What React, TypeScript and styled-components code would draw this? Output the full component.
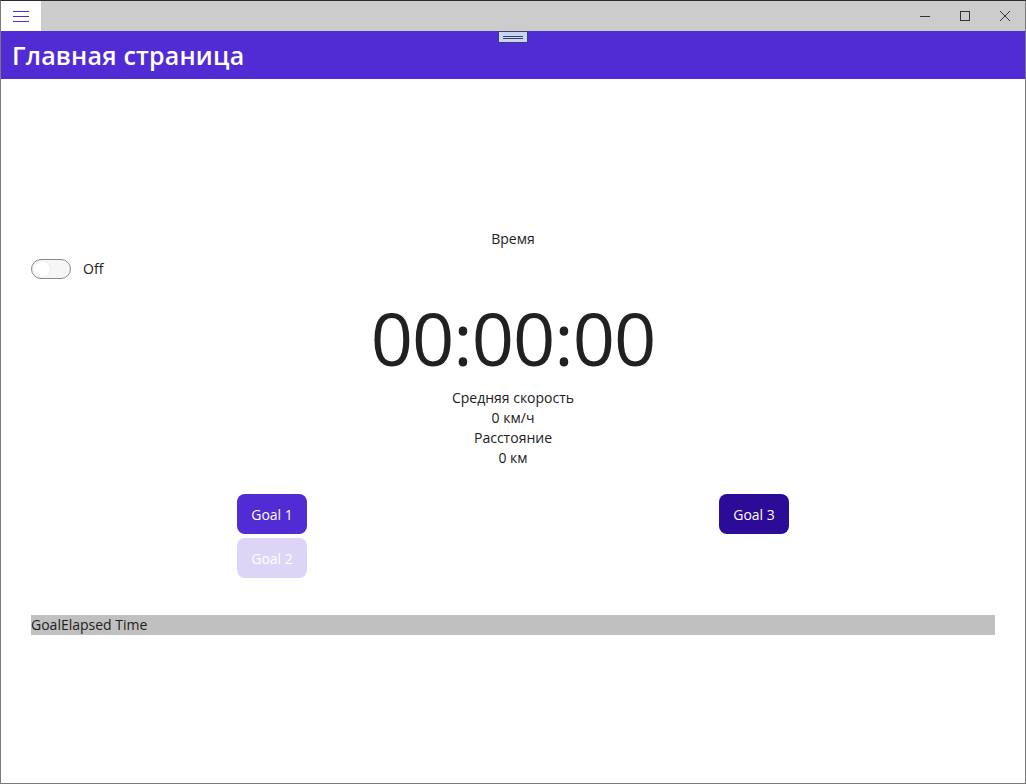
import styled, { createGlobalStyle } from "styled-components"

const Global = createGlobalStyle`
  html, body { margin: 0; padding: 0; background: #ffffff; }
  body { font-family: "Open Sans", "Liberation Sans", sans-serif; color: #212121; }
`

const Frame = styled.div`
  width: 1026px;
  height: 784px;
  box-sizing: border-box;
  border: 1px solid #7a7a7a;
  border-top-color: #2b2b2b;
  display: flex;
  flex-direction: column;
  position: relative;
  overflow: hidden;
`

const TitleBar = styled.div`
  height: 30px;
  background: #cccccc;
  display: flex;
  align-items: stretch;
`

const MenuButton = styled.div`
  width: 40px;
  background: #ffffff;
  display: flex;
  flex-direction: column;
  justify-content: center;
  align-items: center;
  gap: 4px;
`

const MenuLine = styled.span`
  width: 16px;
  height: 1px;
  background: #512bd4;
`

const Spacer = styled.div`
  flex: 1;
`

const WinButton = styled.div`
  width: 40px;
  display: flex;
  align-items: center;
  justify-content: center;
  color: #333;
`

const Header = styled.div`
  height: 48px;
  background: #512bd4;
  display: flex;
  align-items: center;
  padding-left: 11px;
  position: relative;
`

const HeaderTitle = styled.h1`
  margin: 0;
  color: #ffffff;
  font-size: 25px;
  font-weight: 600;
  letter-spacing: 0.2px;
`

const DragHandle = styled.div`
  position: absolute;
  left: 497px;
  top: 0;
  width: 30px;
  height: 12px;
  box-sizing: border-box;
  background: #c9d3f2;
  border: 1px solid #3b3f6b;
  display: flex;
  flex-direction: column;
  justify-content: center;
  align-items: center;
  gap: 1px;
`

const HandleLine = styled.span`
  width: 20px;
  height: 1px;
  background: #3b3f6b;
`

const Content = styled.main`
  flex: 1;
  padding: 150px 30px 0;
  display: flex;
  flex-direction: column;
  font-size: 14px;
`

const Label = styled.div`
  text-align: center;
  line-height: 20px;
`

const ToggleRow = styled.div`
  margin-top: 9px;
  display: flex;
  align-items: center;
  gap: 12px;
  height: 21px;
`

const Toggle = styled.div`
  width: 40px;
  height: 20px;
  box-sizing: border-box;
  border: 1px solid #8a8a8a;
  border-radius: 10px;
  background: #f6f6f6;
  position: relative;
`

const Knob = styled.div`
  position: absolute;
  left: 2px;
  top: 1px;
  width: 16px;
  height: 16px;
  border-radius: 50%;
  background: #ffffff;
  box-shadow: 0 0 2px rgba(0, 0, 0, 0.12);
`

const Clock = styled.div`
  margin-top: 9px;
  text-align: center;
  font-size: 74px;
  line-height: 100px;
  color: #212121;
  letter-spacing: -1px;
`

const Goals = styled.div`
  margin-top: 26px;
  display: grid;
  grid-template-columns: 1fr 1fr;
  row-gap: 4px;
  justify-items: center;
`

const GoalButton = styled.button<{ $bg: string; $fg: string }>`
  width: 70px;
  height: 40px;
  border: none;
  border-radius: 8px;
  background: ${(p) => p.$bg};
  color: ${(p) => p.$fg};
  font-family: inherit;
  font-size: 14px;
  padding: 0;
`

const Table = styled.div`
  margin-top: 37px;
  height: 20px;
  background: #c0c0c0;
  line-height: 20px;
  font-size: 14px;
  color: #212121;
`

export default function App() {
  return (
    <Frame>
      <Global />
      <TitleBar>
        <MenuButton>
          <MenuLine />
          <MenuLine />
          <MenuLine />
        </MenuButton>
        <Spacer />
        <WinButton>
          <svg width="10" height="10" viewBox="0 0 10 10">
            <path d="M0 5.5h10" stroke="#333" strokeWidth="1" />
          </svg>
        </WinButton>
        <WinButton>
          <svg width="10" height="10" viewBox="0 0 10 10">
            <rect x="0.5" y="0.5" width="9" height="9" fill="none" stroke="#333" strokeWidth="1" />
          </svg>
        </WinButton>
        <WinButton>
          <svg width="10" height="10" viewBox="0 0 10 10">
            <path d="M0 0L10 10M10 0L0 10" stroke="#333" strokeWidth="1" />
          </svg>
        </WinButton>
      </TitleBar>
      <Header>
        <HeaderTitle>Главная страница</HeaderTitle>
        <DragHandle>
          <HandleLine />
          <HandleLine />
        </DragHandle>
      </Header>
      <Content>
        <Label>Время</Label>
        <ToggleRow>
          <Toggle>
            <Knob />
          </Toggle>
          <span>Off</span>
        </ToggleRow>
        <Clock>00:00:00</Clock>
        <Label>Средняя скорость</Label>
        <Label>0 км/ч</Label>
        <Label>Расстояние</Label>
        <Label>0 км</Label>
        <Goals>
          <GoalButton $bg="#512bd4" $fg="#ffffff">Goal 1</GoalButton>
          <GoalButton $bg="#2b0b98" $fg="#ffffff">Goal 3</GoalButton>
          <GoalButton $bg="#dcd5f6" $fg="#ffffff">Goal 2</GoalButton>
        </Goals>
        <Table>GoalElapsed Time</Table>
      </Content>
    </Frame>
  )
}
